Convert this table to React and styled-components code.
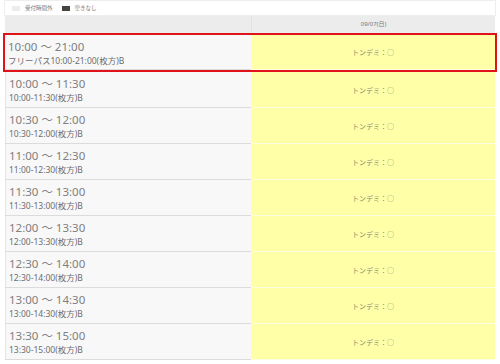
import React from "react";
import styled, { createGlobalStyle } from "styled-components";

const Global = createGlobalStyle`
  html, body { margin: 0; padding: 0; background: #fff; }
  body { font-family: "Noto Sans", "Noto Sans CJK JP", sans-serif; }
`;

const Page = styled.div`
  width: 500px;
  padding: 0 3px;
  box-sizing: border-box;
`;

const Legend = styled.div`
  display: flex;
  align-items: center;
  height: 16px;
  margin: 0 1px;
  padding-left: 7px;
  border: 1px solid #eeeeee;
  box-sizing: border-box;
  gap: 5px;
  font-size: 5.5px;
  line-height: 8px;
  color: #777;
`;

const Swatch = styled.span`
  display: inline-block;
  width: 8px;
  height: 5px;
  background: ${(p) => p.$color};
  margin-left: ${(p) => p.$ml || 0}px;
`;

const HeaderRow = styled.div`
  display: grid;
  grid-template-columns: 246px 1fr;
  height: 17px;
  margin: 0 2px;
  background: #ececec;
`;

const HeaderCell = styled.div`
  display: flex;
  align-items: center;
  justify-content: center;
  font-size: 6px;
  line-height: 9px;
  color: #777;
  border-left: ${(p) => (p.$sep ? "1px solid #e2e2e2" : "none")};
`;

const Row = styled.div`
  display: grid;
  grid-template-columns: 246px 1fr;
  height: ${(p) => (p.$first ? 39 : 36)}px;
  box-sizing: border-box;
  border: ${(p) => (p.$first ? "2px solid #e0131a" : "none")};
  margin: ${(p) => (p.$first ? "0" : "0 2px")};
`;

const TimeCell = styled.div`
  display: flex;
  flex-direction: column;
  justify-content: center;
  padding-left: 3px;
  padding-top: 1px;
  background: #f8f8f8;
  border-left: ${(p) => (p.$first ? "none" : "1px solid #e6e6e6")};
  border-bottom: 1px solid #dcdcdc;
  box-sizing: border-box;
`;

const Time = styled.div`
  font-size: 11.5px;
  line-height: 16px;
  color: #808080;
`;

const Sub = styled.div`
  font-size: 8.5px;
  line-height: 12px;
  color: #6e6e6e;
`;

const SlotCell = styled.div`
  display: flex;
  align-items: center;
  justify-content: center;
  background: #ffffa8;
  border-bottom: 1px solid #fffde0;
  font-family: "Noto Sans CJK JP", sans-serif;
  font-size: 7px;
  line-height: 10px;
  color: #8a8a72;
  box-sizing: border-box;
`;

const rows = [
  ["10:00 ～ 21:00", "フリーパス10:00-21:00(枚方)B"],
  ["10:00 ～ 11:30", "10:00-11:30(枚方)B"],
  ["10:30 ～ 12:00", "10:30-12:00(枚方)B"],
  ["11:00 ～ 12:30", "11:00-12:30(枚方)B"],
  ["11:30 ～ 13:00", "11:30-13:00(枚方)B"],
  ["12:00 ～ 13:30", "12:00-13:30(枚方)B"],
  ["12:30 ～ 14:00", "12:30-14:00(枚方)B"],
  ["13:00 ～ 14:30", "13:00-14:30(枚方)B"],
  ["13:30 ～ 15:00", "13:30-15:00(枚方)B"],
];

export default function App() {
  return (
    <>
      <Global />
      <Page>
        <Legend>
          <Swatch $color="#ececec" />
          <span>受付時間外</span>
          <Swatch $color="#444" $ml={4} />
          <span>空きなし</span>
        </Legend>
        <HeaderRow>
          <HeaderCell />
          <HeaderCell $sep>09/07(日)</HeaderCell>
        </HeaderRow>
        {rows.map(([t, s], i) => (
          <Row key={i} $first={i === 0}>
            <TimeCell $first={i === 0}>
              <Time>{t}</Time>
              <Sub>{s}</Sub>
            </TimeCell>
            <SlotCell>トンデミ：○</SlotCell>
          </Row>
        ))}
      </Page>
    </>
  );
}
